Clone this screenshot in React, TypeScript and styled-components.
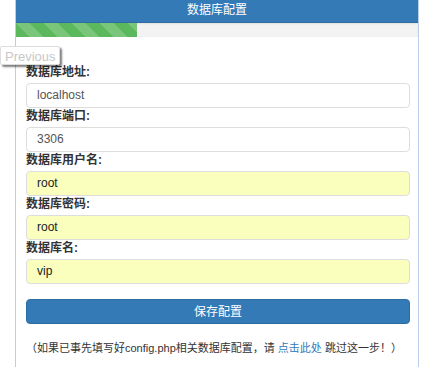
import { FunctionComponent } from "react";
import styled, { createGlobalStyle } from "styled-components";

const GlobalStyle = createGlobalStyle`
  body {
    margin: 0;
    background: #fff;
    font-family: "Liberation Sans", "Noto Sans CJK SC", sans-serif;
    font-size: 12px;
    color: #333;
  }
`;

const Page = styled.div`
  position: relative;
  width: 428px;
  height: 367px;
  overflow: hidden;
`;

const Panel = styled.div`
  margin-left: 15px;
  width: 402px;
  min-height: 367px;
  border-left: 1px solid #b7cfe9;
  border-right: 1px solid #b7cfe9;
`;

const Header = styled.div`
  height: 22px;
  line-height: 20px;
  background: #337ab7;
  color: #fff;
  text-align: center;
  font-size: 12px;
  border-bottom: 1px solid #2e6da4;
`;

const Progress = styled.div`
  height: 14px;
  background: #f3f3f3;
  box-shadow: inset 0 1px 2px rgba(0, 0, 0, 0.08);
`;

const ProgressBar = styled.div`
  height: 100%;
  background-color: #5cb85c;
  background-image: linear-gradient(
    45deg,
    rgba(255, 255, 255, 0.18) 25%,
    transparent 25%,
    transparent 50%,
    rgba(255, 255, 255, 0.18) 50%,
    rgba(255, 255, 255, 0.18) 75%,
    transparent 75%,
    transparent
  );
  background-size: 28px 28px;
`;

const PrevButton = styled.div`
  position: absolute;
  left: 0;
  top: 46px;
  width: 60px;
  height: 19px;
  line-height: 19px;
  padding-left: 4px;
  box-sizing: border-box;
  background: #fff;
  border: 1px solid #ddd;
  border-radius: 2px;
  box-shadow: 2px 2px 2px rgba(0, 0, 0, 0.5);
  color: #c8c8c8;
  font-size: 13px;
`;

const Form = styled.div`
  padding: 27px 8px 0 10px;
`;

const Label = styled.div`
  height: 19px;
  line-height: 17px;
  font-weight: bold;
  font-size: 12px;
  color: #333;
`;

const Field = styled.div<{ $filled?: boolean }>`
  height: 25px;
  box-sizing: border-box;
  border: 1px solid #ddd;
  border-radius: 4px;
  padding-left: 10px;
  line-height: 23px;
  font-size: 12px;
  background: ${(p) => (p.$filled ? "#faffbd" : "#fff")};
  color: ${(p) => (p.$filled ? "#222" : "#555")};
`;

const SaveButton = styled.div`
  margin-top: 15px;
  height: 25px;
  line-height: 25px;
  border-radius: 4px;
  background: #337ab7;
  border: 1px solid #2e6da4;
  box-sizing: border-box;
  color: #fff;
  text-align: center;
  font-size: 12px;
`;

const Note = styled.div`
  margin-top: 14px;
  font-size: 11px;
  line-height: 20px;
  color: #333;
  white-space: nowrap;
`;

const Link = styled.a`
  color: #337ab7;
  text-decoration: none;
`;

interface FieldDef {
  label: string;
  value: string;
  filled?: boolean;
}

const fields: FieldDef[] = [
  { label: "数据库地址:", value: "localhost" },
  { label: "数据库端口:", value: "3306" },
  { label: "数据库用户名:", value: "root", filled: true },
  { label: "数据库密码:", value: "root", filled: true },
  { label: "数据库名:", value: "vip", filled: true },
];

const App: FunctionComponent = () => (
  <Page>
    <GlobalStyle />
    <Panel>
      <Header>数据库配置</Header>
      <Progress>
        <ProgressBar style={{ width: "30%" }} />
      </Progress>
      <Form>
        {fields.map((f) => (
          <div key={f.label}>
            <Label>{f.label}</Label>
            <Field $filled={f.filled}>{f.value}</Field>
          </div>
        ))}
        <SaveButton>保存配置</SaveButton>
        <Note>
          （如果已事先填写好config.php相关数据库配置，请 <Link href="#">点击此处</Link> 跳过这一步！）
        </Note>
      </Form>
    </Panel>
    <PrevButton>Previous</PrevButton>
  </Page>
);

export default App;
